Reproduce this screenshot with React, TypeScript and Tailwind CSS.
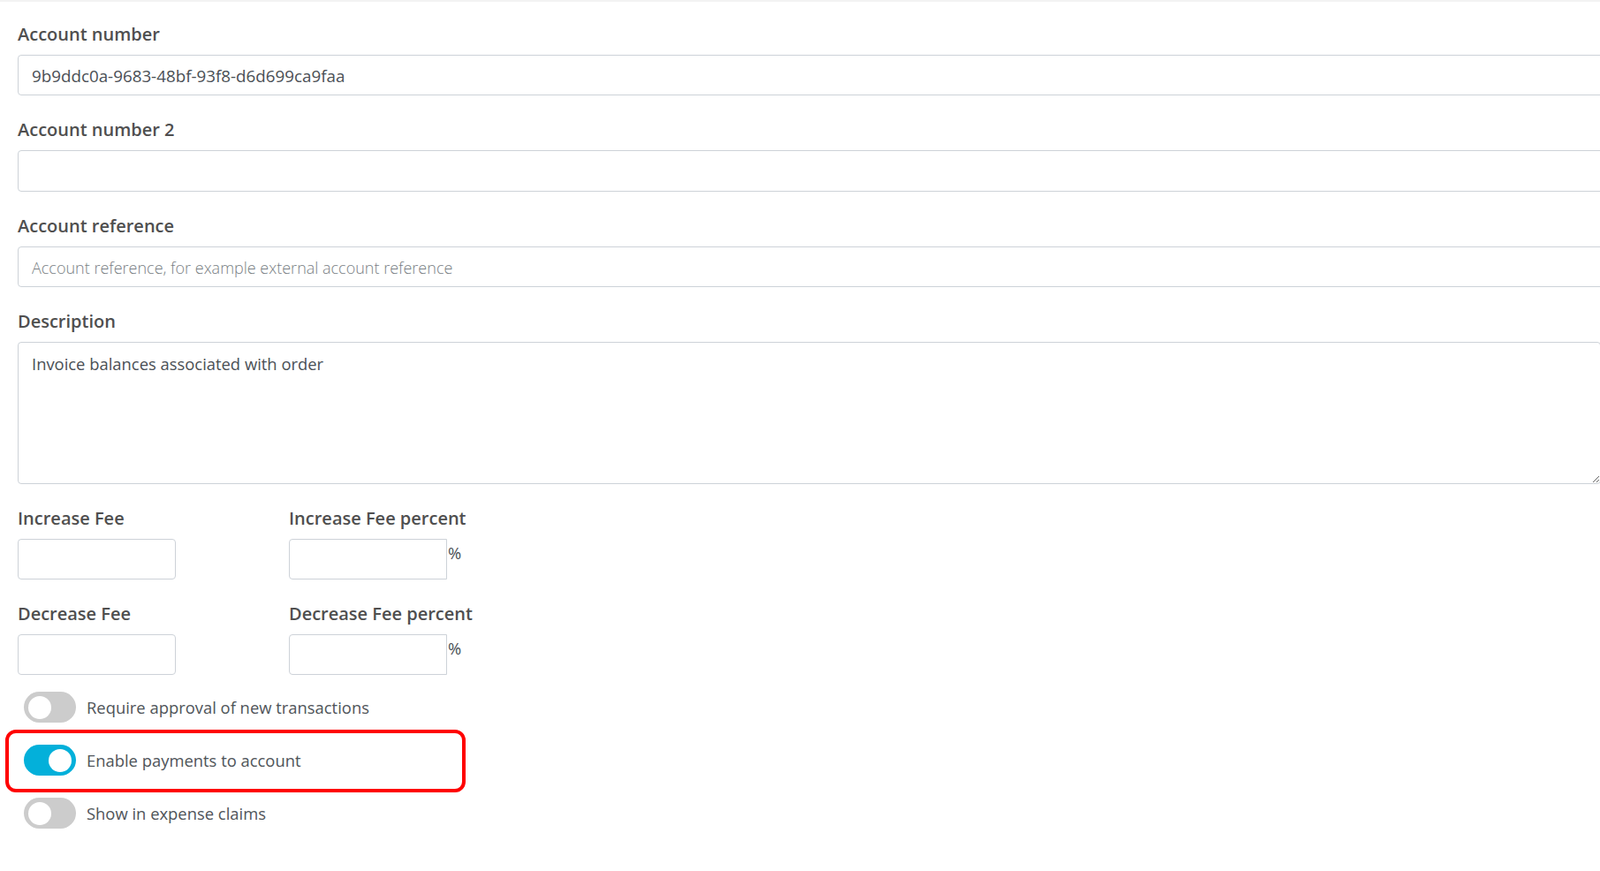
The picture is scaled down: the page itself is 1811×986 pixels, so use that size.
import React from "react";

const font = { fontFamily: '"Open Sans", "Noto Sans", sans-serif' };

function Label({ children }: { children: React.ReactNode }) {
  return (
    <div className="text-[20px] leading-[30px] font-semibold text-[#4f4f4f] mb-[8px]">
      {children}
    </div>
  );
}

function Toggle({ on }: { on: boolean }) {
  return (
    <div
      className={
        "w-[59px] h-[35px] rounded-full flex items-center px-[5px] shrink-0 " +
        (on ? "bg-[#03b0da] justify-end" : "bg-[#cccccc] justify-start")
      }
    >
      <div className="w-[26px] h-[26px] rounded-full bg-white" />
    </div>
  );
}

export default function App() {
  return (
    <div className="w-full min-h-[986px] bg-white overflow-hidden" style={font}>
      <div className="h-[2px] bg-[#f3f3f3]" />
      <div className="pl-[20px] pt-[22px]">
        <div className="mb-[24px]">
          <Label>Account number</Label>
          <input
            readOnly
            value="9b9ddc0a-9683-48bf-93f8-d6d699ca9faa"
            className="w-[1800px] h-[46px] border border-[#cdd2d8] rounded-[4px] px-[15px] pt-[2px] text-[18.8px] text-[#4a4f55] outline-none"
          />
        </div>
        <div className="mb-[24px]">
          <Label>Account number 2</Label>
          <input
            readOnly
            className="w-[1800px] h-[47px] border border-[#cdd2d8] rounded-[4px] px-[15px] text-[18px] text-[#4a4f55] outline-none"
          />
        </div>
        <div className="mb-[24px]">
          <Label>Account reference</Label>
          <input
            readOnly
            placeholder="Account reference, for example external account reference"
            className="w-[1800px] h-[46px] border border-[#cdd2d8] rounded-[4px] px-[15px] pt-[2px] text-[18px] font-light text-[#4a4f55] placeholder:text-[#7a7f85] outline-none"
          />
        </div>
        <div className="mb-[24px]">
          <Label>Description</Label>
          <textarea
            readOnly
            value="Invoice balances associated with order"
            className="block w-[1792px] h-[161px] border border-[#cdd2d8] rounded-[4px] px-[15px] pt-[10px] pb-[7px] text-[18.4px] leading-[27px] text-[#4a4f55] outline-none resize"
          />
        </div>
        <div className="flex mb-[24px]">
          <div className="w-[307px]">
            <Label>Increase Fee</Label>
            <input
              readOnly
              className="w-[179px] h-[46px] border border-[#cdd2d8] rounded-[4px] px-[15px] text-[18px] outline-none"
            />
          </div>
          <div>
            <Label>Increase Fee percent</Label>
            <div className="flex items-start">
              <input
                readOnly
                className="w-[179px] h-[46px] border border-[#cdd2d8] rounded-l-[4px] px-[15px] text-[18px] outline-none"
              />
              <span className="text-[18.4px] leading-[27px] text-[#4a4f55] ml-[1px] mt-[2px]">%</span>
            </div>
          </div>
        </div>
        <div className="flex">
          <div className="w-[307px]">
            <Label>Decrease Fee</Label>
            <input
              readOnly
              className="w-[179px] h-[46px] border border-[#cdd2d8] rounded-[4px] px-[15px] text-[18px] outline-none"
            />
          </div>
          <div>
            <Label>Decrease Fee percent</Label>
            <div className="flex items-start">
              <input
                readOnly
                className="w-[179px] h-[46px] border border-[#cdd2d8] rounded-l-[4px] px-[15px] text-[18px] outline-none"
              />
              <span className="text-[18.4px] leading-[27px] text-[#4a4f55] ml-[1px] mt-[2px]">%</span>
            </div>
          </div>
        </div>
        <div className="pl-[7px] pt-[19px] flex flex-col gap-[25px]">
          <div className="flex items-center gap-[12px]">
            <Toggle on={false} />
            <span className="text-[18.4px] text-[#4f5459]">Require approval of new transactions</span>
          </div>
          <div className="relative flex items-center gap-[12px]">
            <div className="absolute left-[-21px] top-[-17px] w-[521px] h-[71px] border-[4px] border-[#ff0000] rounded-[12px] pointer-events-none" />
            <Toggle on={true} />
            <span className="text-[18.4px] text-[#4f5459]">Enable payments to account</span>
          </div>
          <div className="flex items-center gap-[12px]">
            <Toggle on={false} />
            <span className="text-[18.4px] text-[#4f5459]">Show in expense claims</span>
          </div>
        </div>
      </div>
    </div>
  );
}
